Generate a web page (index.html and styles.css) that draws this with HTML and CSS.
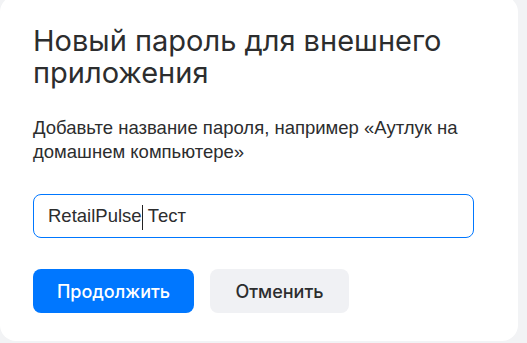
FILE: index.html
```html
<!DOCTYPE html>
<html lang="ru">
<head>
<meta charset="utf-8">
<link rel="stylesheet" href="styles.css">
</head>
<body>
<div class="card">
  <h1 class="title">Новый пароль для внешнего приложения</h1>
  <p class="desc">Добавьте название пароля, например «Аутлук на домашнем компьютере»</p>
  <div class="field"><span class="value">RetailPulse</span><span class="caret"></span><span class="value"> Тест</span></div>
  <div class="actions">
    <button class="btn btn-primary">Продолжить</button>
    <button class="btn btn-secondary">Отменить</button>
  </div>
</div>
</body>
</html>
```
FILE: styles.css
```css
html, body {
  margin: 0;
  padding: 0;
  background: #f2f3f5;
  width: 527px;
  height: 343px;
  overflow: hidden;
}
.card {
  box-sizing: border-box;
  width: 518px;
  height: 345px;
  margin-top: -4px;
  background: #ffffff;
  border-radius: 16px;
  padding: 29px 40px 0 33px;
}
.title {
  margin: 0;
  font-family: Inter, "Noto Sans", sans-serif;
  font-weight: 400;
  font-size: 29px;
  line-height: 32px;
  color: #2c2d2e;
  letter-spacing: 0;
}
.desc {
  margin: 27px 0 0;
  font-family: "Liberation Sans", Arial, sans-serif;
  font-size: 18.5px;
  line-height: 24px;
  color: #2c2d2e;
}
.field {
  box-sizing: border-box;
  margin-top: 30px;
  width: 441px;
  height: 44px;
  border: 1px solid #0077ff;
  border-radius: 8px;
  padding: 0 14px;
  display: flex;
  align-items: center;
  font-family: "Liberation Sans", Arial, sans-serif;
  font-size: 18.5px;
  color: #2c2d2e;
  white-space: pre;
}
.caret {
  display: inline-block;
  width: 1px;
  height: 25px;
  margin-top: 2px;
  background: #222;
}
.actions {
  display: flex;
  gap: 16px;
  margin-top: 31px;
}
.btn {
  height: 44px;
  border: none;
  border-radius: 8px;
  padding: 0;
  font-family: Inter, "Noto Sans", sans-serif;
  font-size: 18px;
  font-weight: 500;
  cursor: pointer;
}
.btn-primary {
  background: #0077ff;
  color: #ffffff;
  width: 161px;
}
.btn-secondary {
  background: #f0f1f4;
  color: #2c2d2e;
  width: 139px;
}
```
